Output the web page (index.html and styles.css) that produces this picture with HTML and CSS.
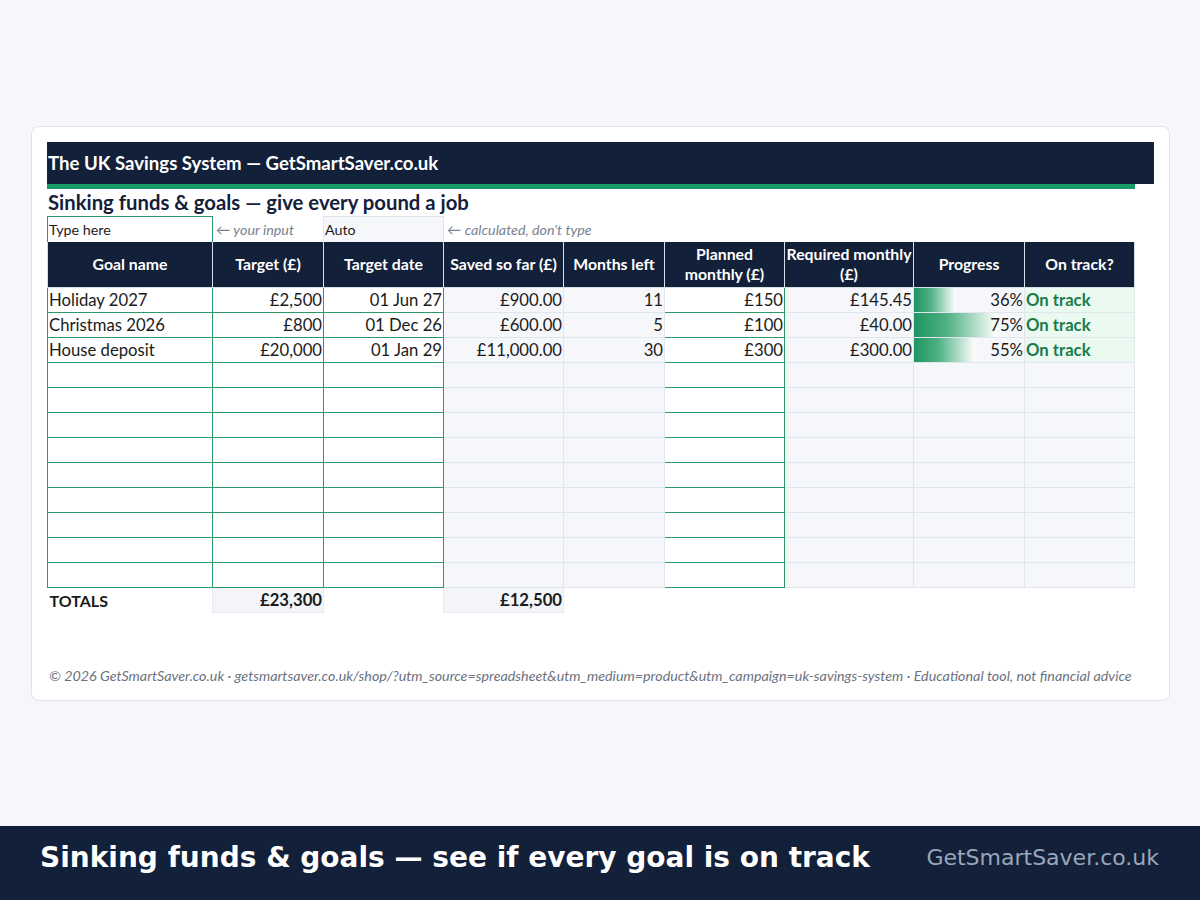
FILE: index.html
```html
<!DOCTYPE html>
<html lang="en">
<head>
<meta charset="utf-8">
<title>Sinking funds &amp; goals</title>
<link rel="stylesheet" href="styles.css">
</head>
<body>
<div class="stage">
  <div class="card">
    <div class="titlebar">The UK Savings System — GetSmartSaver.co.uk</div>
    <div class="accent"></div>
    <div class="subtitle">Sinking funds &amp; goals — give every pound a job</div>
    <table class="sheet">
      <colgroup>
        <col style="width:165px"><col style="width:111px"><col style="width:120px"><col style="width:120px"><col style="width:101px"><col style="width:120px"><col style="width:129px"><col style="width:111px"><col style="width:110px">
      </colgroup>
      <tr class="legend">
        <td class="in">Type here</td>
        <td class="note">← your input</td>
        <td class="calc">Auto</td>
        <td class="note" colspan="6">← calculated, don't type</td>
      </tr>
      <tr class="head">
        <th>Goal name</th><th>Target (£)</th><th>Target date</th><th>Saved so far (£)</th><th>Months left</th><th>Planned monthly (£)</th><th>Required monthly (£)</th><th>Progress</th><th>On track?</th>
      </tr>
      <tr>
        <td class="in">Holiday 2027</td><td class="in r">£2,500</td><td class="in r">01 Jun 27</td><td class="calc r">£900.00</td><td class="calc r">11</td><td class="in r">£150</td><td class="calc r">£145.45</td>
        <td class="calc prog"><span class="bar" style="width:38%"></span><span class="pct">36%</span></td><td class="ok">On track</td>
      </tr>
      <tr>
        <td class="in">Christmas 2026</td><td class="in r">£800</td><td class="in r">01 Dec 26</td><td class="calc r">£600.00</td><td class="calc r">5</td><td class="in r">£100</td><td class="calc r">£40.00</td>
        <td class="calc prog"><span class="bar" style="width:75%"></span><span class="pct">75%</span></td><td class="ok">On track</td>
      </tr>
      <tr>
        <td class="in">House deposit</td><td class="in r">£20,000</td><td class="in r">01 Jan 29</td><td class="calc r">£11,000.00</td><td class="calc r">30</td><td class="in r">£300</td><td class="calc r">£300.00</td>
        <td class="calc prog"><span class="bar" style="width:55%"></span><span class="pct">55%</span></td><td class="ok">On track</td>
      </tr>
      <tr class="empty"><td class="in"></td><td class="in"></td><td class="in"></td><td class="calc"></td><td class="calc"></td><td class="in"></td><td class="calc"></td><td class="calc"></td><td class="calc"></td></tr>
      <tr class="empty"><td class="in"></td><td class="in"></td><td class="in"></td><td class="calc"></td><td class="calc"></td><td class="in"></td><td class="calc"></td><td class="calc"></td><td class="calc"></td></tr>
      <tr class="empty"><td class="in"></td><td class="in"></td><td class="in"></td><td class="calc"></td><td class="calc"></td><td class="in"></td><td class="calc"></td><td class="calc"></td><td class="calc"></td></tr>
      <tr class="empty"><td class="in"></td><td class="in"></td><td class="in"></td><td class="calc"></td><td class="calc"></td><td class="in"></td><td class="calc"></td><td class="calc"></td><td class="calc"></td></tr>
      <tr class="empty"><td class="in"></td><td class="in"></td><td class="in"></td><td class="calc"></td><td class="calc"></td><td class="in"></td><td class="calc"></td><td class="calc"></td><td class="calc"></td></tr>
      <tr class="empty"><td class="in"></td><td class="in"></td><td class="in"></td><td class="calc"></td><td class="calc"></td><td class="in"></td><td class="calc"></td><td class="calc"></td><td class="calc"></td></tr>
      <tr class="empty"><td class="in"></td><td class="in"></td><td class="in"></td><td class="calc"></td><td class="calc"></td><td class="in"></td><td class="calc"></td><td class="calc"></td><td class="calc"></td></tr>
      <tr class="empty"><td class="in"></td><td class="in"></td><td class="in"></td><td class="calc"></td><td class="calc"></td><td class="in"></td><td class="calc"></td><td class="calc"></td><td class="calc"></td></tr>
      <tr class="empty"><td class="in"></td><td class="in"></td><td class="in"></td><td class="calc"></td><td class="calc"></td><td class="in"></td><td class="calc"></td><td class="calc"></td><td class="calc"></td></tr>
      <tr class="totals">
        <td class="lbl">TOTALS</td><td class="tot r">£23,300</td><td class="blank"></td><td class="tot r">£12,500</td><td class="blank" colspan="5"></td>
      </tr>
    </table>
    <div class="footnote">© 2026 GetSmartSaver.co.uk · getsmartsaver.co.uk/shop/?utm_source=spreadsheet&amp;utm_medium=product&amp;utm_campaign=uk-savings-system · Educational tool, not financial advice</div>
  </div>
</div>
<div class="banner">
  <div class="banner-title">Sinking funds &amp; goals — see if every goal is on track</div>
  <div class="banner-site">GetSmartSaver.co.uk</div>
</div>
</body>
</html>
```
FILE: styles.css
```css
* { box-sizing: border-box; }
html, body { margin: 0; padding: 0; }
body {
  width: 1200px;
  height: 900px;
  background: #f5f7fa;
  font-family: Lato, "Noto Sans", sans-serif;
  color: #1b1b1b;
  display: flex;
  flex-direction: column;
  overflow: hidden;
}
.stage {
  height: 826px;
  padding: 126px 0 0 31px;
}
.card {
  width: 1139px;
  height: 575px;
  background: #ffffff;
  border: 1px solid #dfe3e9;
  border-radius: 8px;
  padding: 15px 0 0 15px;
  display: flex;
  flex-direction: column;
}
.titlebar {
  width: 1107px;
  height: 42px;
  background: #13203a;
  color: #ffffff;
  font-weight: 700;
  font-size: 18.6px;
  line-height: 42px;
  padding-left: 1px;
}
.accent {
  width: 1088px;
  height: 5px;
  background: #179c68;
}
.subtitle {
  height: 27px;
  font-size: 20.3px;
  font-weight: 700;
  color: #14203a;
  line-height: 27px;
  padding-left: 1px;
}
.sheet {
  table-layout: fixed;
  border-collapse: collapse;
  width: 1087px;
  font-size: 16.7px;
}
.sheet td, .sheet th {
  padding: 0 1px;
  white-space: nowrap;
  overflow: hidden;
}
.sheet tr { height: 25px; }
.sheet td.r { text-align: right; }
.sheet td.in {
  background: #ffffff;
  border: 1px solid #2b9a68;
}
.sheet td.calc {
  background: #f5f7fa;
  border: 1px solid #e1e5ec;
}
.sheet tr.legend td { font-size: 14.3px; height: 25px; }
.sheet tr.legend td.note {
  color: #7a8291;
  font-style: italic;
  border: none;
  padding-left: 3px;
}
.sheet tr.legend td.in { border-bottom: none; }
.sheet tr.legend td.calc { border-bottom: none; }
.sheet tr.head { height: 46px; }
.sheet tr.head th {
  background: #13203a;
  color: #ffffff;
  font-size: 15.8px;
  font-weight: 700;
  line-height: 20px;
  text-align: center;
  white-space: normal;
  border: 1px solid #d7dde6;
  border-top: none;
  padding: 0 1px;
}
.prog { position: relative; }
.prog .bar {
  position: absolute;
  left: 0;
  top: 0;
  bottom: 0;
  background: linear-gradient(to right, #1e9561 0%, #4fb184 40%, #ffffff 100%);
}
.prog .pct {
  position: relative;
  display: block;
  text-align: right;
}
.sheet td.ok {
  background: #ebfaf0;
  border: 1px solid #e1e5ec;
  color: #1a7a4c;
  font-weight: 700;
}
.totals td { border: none; }
.sheet tr.totals td.lbl {
  font-weight: 700;
  font-size: 16px;
  padding-left: 2px;
  vertical-align: middle;
}
.totals td.tot {
  background: #f3f5f8;
  border: 1px solid #e8ebf0;
  font-weight: 700;
}
.footnote {
  margin-top: 54px;
  width: 1087px;
  font-size: 14.3px;
  font-style: italic;
  color: #6b7280;
  white-space: nowrap;
  overflow: hidden;
  padding-left: 2px;
}
.banner {
  height: 74px;
  background: #13203a;
  display: flex;
  align-items: center;
  justify-content: space-between;
  padding: 0 41px 12px 40px;
  font-family: "DejaVu Sans", sans-serif;
}
.banner-title {
  color: #ffffff;
  font-weight: 700;
  font-size: 28px;
}
.banner-site {
  color: #9aa6ba;
  font-size: 22px;
}
```
